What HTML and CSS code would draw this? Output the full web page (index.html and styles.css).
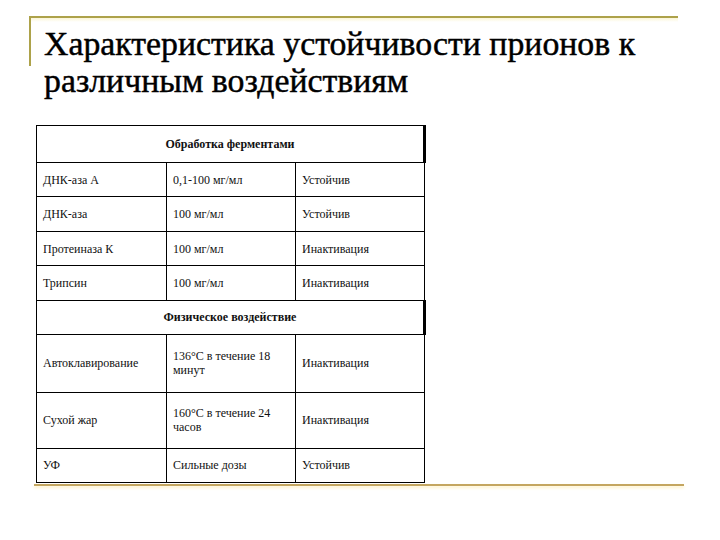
FILE: index.html
```html
<!DOCTYPE html>
<html lang="ru">
<head>
<meta charset="utf-8">
<title>Характеристика устойчивости прионов</title>
<link rel="stylesheet" href="styles.css">
</head>
<body>
<div class="slide">
  <header class="title-block">
    <div class="bar"></div>
    <h1 class="title">Характеристика устойчивости прионов к различным воздействиям</h1>
  </header>
  <table class="data">
    <colgroup>
      <col class="c1"><col class="c2"><col class="c3">
    </colgroup>
    <tbody>
      <tr class="head h1"><td colspan="3">Обработка ферментами</td></tr>
      <tr class="row"><td>ДНК-аза А</td><td>0,1-100 мг/мл</td><td>Устойчив</td></tr>
      <tr class="row"><td>ДНК-аза</td><td>100 мг/мл</td><td>Устойчив</td></tr>
      <tr class="row"><td>Протеиназа К</td><td>100 мг/мл</td><td>Инактивация</td></tr>
      <tr class="row"><td>Трипсин</td><td>100 мг/мл</td><td>Инактивация</td></tr>
      <tr class="head h2"><td colspan="3">Физическое воздействие</td></tr>
      <tr class="row tall"><td>Автоклавирование</td><td>136°С в течение 18<br>минут</td><td>Инактивация</td></tr>
      <tr class="row tall2"><td>Сухой жар</td><td>160°С в течение 24<br>часов</td><td>Инактивация</td></tr>
      <tr class="row last"><td>УФ</td><td>Сильные дозы</td><td>Устойчив</td></tr>
    </tbody>
  </table>
  <div class="foot-line"></div>
</div>
</body>
</html>
```

FILE: styles.css
```css
html, body {
  margin: 0;
  padding: 0;
  background: #ffffff;
}

.slide {
  width: 720px;
  height: 540px;
  padding-top: 16px;
  box-sizing: border-box;
}

.title-block {
  margin-left: 29px;
  width: 649px;
  border-top: 2px solid #ada24a;
  background: linear-gradient(#fbf5d6, #ffffff 4px);
  display: grid;
  grid-template-columns: 2px 1fr;
  align-items: start;
}

.bar {
  height: 48px;
  background: #ada24a;
}

.title {
  margin: 0;
  padding: 7px 0 0 13px;
  font-family: "Liberation Serif", "Times New Roman", serif;
  font-weight: normal;
  font-size: 33.8px;
  line-height: 37px;
  color: #000;
  -webkit-text-stroke: 0.45px #000;
}

.data {
  margin: 26px 0 0 36px;
  border-collapse: collapse;
  table-layout: fixed;
  font-family: "Liberation Serif", "Times New Roman", serif;
  font-size: 12px;
  color: #111;
}

.c1 { width: 130px; }
.c2 { width: 129px; }
.c3 { width: 129px; }

.data td {
  border: 1px solid #000;
  padding: 0 6px;
  vertical-align: middle;
  line-height: 14px;
}

.head td {
  text-align: center;
  font-weight: bold;
  border-right: 3px solid #000;
}

.h1 td { height: 35.8px; }
.h2 td { height: 33px; }

.row td { height: 33.55px; }
.row.tall td { height: 57px; }
.row.tall2 td { height: 55px; }
.row.last td { height: 32.6px; }

.foot-line {
  margin: 1px 0 0 34px;
  width: 650px;
  height: 2px;
  background: #c4a660;
  box-shadow: 0 2px 3px #fff1c4;
}
```
